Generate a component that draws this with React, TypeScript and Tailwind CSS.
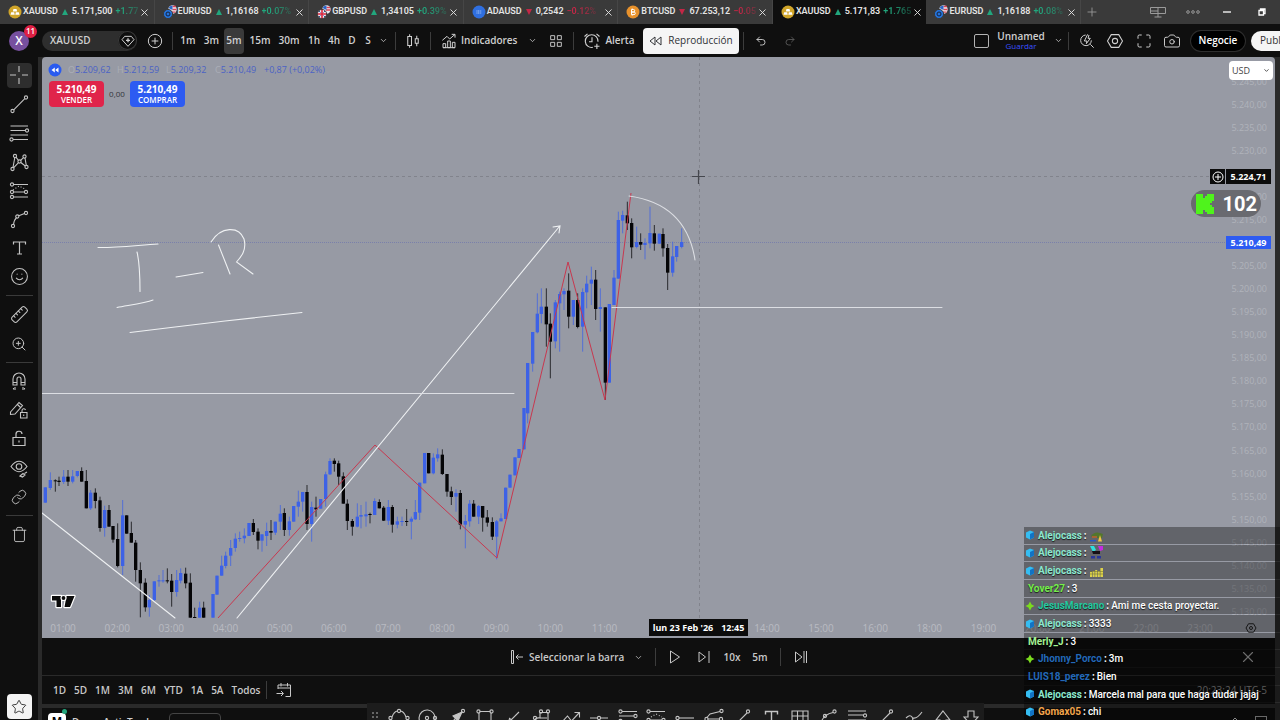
import React from "react";
import { Camera, ChevronDown, Eye, Link, LockOpen, Maximize, Plus, Redo2, Ruler, Smile, Star, Trash, Undo2, X, ZoomIn } from "lucide-react";

type Kids = { children: React.ReactNode };

function Ico({ children, className = "size-6" }: Kids & { className?: string }) {
  return (
    <svg viewBox="0 0 24 24" className={className} fill="none" stroke="currentColor" strokeWidth="1.1" aria-hidden="true">
      {children}
    </svg>
  );
}

/* x, body top, body bottom, wick top, wick bottom, falling */
type Candle = [number, number, number, number, number, number];

const session1: Candle[] = [
  [16, 142, 188, 142, 188, 0], [31, 120, 144, 97, 150, 0], [46, 121, 123, 118, 155, 1], [57, 122, 126, 110, 138, 1],
  [71, 110, 126, 90, 132, 0], [84, 110, 125, 90, 138, 1], [98, 109, 125, 90, 130, 0], [112, 93, 108, 93, 112, 0],
  [125, 93, 125, 82, 125, 1], [139, 123, 205, 90, 205, 1], [152, 158, 205, 150, 210, 0], [166, 158, 183, 145, 205, 1],
  [180, 181, 264, 170, 275, 1], [194, 210, 264, 197, 290, 0], [207, 210, 260, 195, 260, 1], [219, 258, 299, 258, 308, 1],
  [233, 297, 378, 250, 382, 1], [248, 226, 378, 180, 405, 0], [260, 226, 281, 226, 281, 1], [274, 279, 308, 245, 308, 1],
  [287, 308, 390, 300, 425, 1], [301, 390, 430, 367, 532, 1], [316, 428, 502, 415, 515, 1], [328, 480, 502, 465, 530, 0],
  [343, 424, 480, 424, 483, 0], [357, 421, 423, 405, 440, 0], [369, 421, 423, 390, 428, 0], [382, 421, 423, 385, 430, 1],
  [395, 422, 456, 402, 500, 1], [410, 420, 456, 390, 470, 0], [422, 399, 422, 385, 430, 0], [437, 401, 430, 383, 445, 1],
  [451, 428, 533, 400, 533, 1], [464, 531, 533, 503, 533, 1], [479, 503, 533, 485, 533, 0], [491, 503, 533, 485, 533, 1],
  [519, 462, 533, 462, 533, 0], [531, 407, 464, 407, 464, 0], [545, 377, 407, 347, 407, 0], [557, 347, 378, 335, 385, 0],
  [572, 324, 347, 300, 378, 0], [586, 296, 324, 280, 335, 0], [599, 294, 296, 275, 305, 0], [613, 287, 295, 265, 310, 0],
  [627, 249, 288, 249, 288, 0], [640, 249, 276, 237, 285, 1], [654, 275, 302, 265, 328, 1], [666, 283, 302, 283, 335, 0],
  [680, 273, 288, 248, 318, 0],
];
const session2: Candle[] = [
  [3, 333, 338, 300, 360, 1], [16, 305, 338, 305, 345, 0], [31, 281, 305, 255, 330, 0], [43, 279, 330, 265, 348, 1],
  [58, 304, 330, 290, 347, 0], [71, 258, 305, 258, 305, 0], [85, 245, 260, 212, 290, 0], [98, 216, 245, 216, 275, 0],
  [111, 216, 312, 195, 330, 1], [125, 261, 312, 245, 365, 0], [138, 263, 268, 230, 290, 1], [152, 237, 266, 237, 266, 0],
  [167, 163, 237, 155, 260, 0], [180, 123, 163, 115, 165, 0], [193, 122, 132, 115, 155, 1], [206, 130, 170, 122, 195, 1],
  [220, 169, 251, 157, 251, 1], [232, 251, 303, 238, 330, 1], [247, 303, 320, 297, 347, 1], [262, 290, 320, 250, 322, 0],
  [273, 285, 290, 255, 325, 0], [288, 283, 289, 245, 320, 0], [300, 282, 284, 278, 310, 1], [314, 243, 285, 235, 285, 0],
  [328, 246, 265, 238, 265, 1], [341, 263, 302, 258, 303, 1], [355, 261, 302, 240, 315, 0], [367, 261, 314, 255, 338, 1],
  [382, 304, 314, 290, 325, 0], [396, 303, 305, 290, 318, 0], [410, 303, 305, 267, 318, 1], [424, 296, 305, 290, 358, 0],
  [436, 276, 298, 240, 300, 0], [449, 188, 278, 188, 300, 0], [464, 99, 190, 99, 190, 0], [476, 99, 160, 99, 160, 1],
  [490, 113, 160, 100, 163, 0], [503, 103, 115, 85, 125, 0], [517, 104, 162, 88, 165, 1], [531, 162, 215, 162, 230, 1],
  [544, 214, 231, 200, 255, 1], [558, 219, 230, 208, 275, 0], [571, 219, 314, 210, 328, 1], [586, 303, 314, 285, 385, 0],
  [599, 251, 304, 240, 320, 0], [611, 251, 290, 240, 290, 1], [626, 258, 290, 255, 312, 0], [638, 258, 293, 258, 335, 1],
  [652, 292, 308, 270, 320, 1], [667, 306, 350, 292, 360, 1], [680, 304, 350, 300, 418, 0], [693, 295, 304, 280, 304, 0],
  [707, 203, 297, 203, 297, 0], [720, 164, 203, 164, 203, 0], [735, 112, 166, 112, 166, 0], [747, 87, 114, 87, 114, 0],
  [762, -36, 88, -36, 88, 0],
];
const session3: Candle[] = [
  [143, 609, 760, 609, 790, 0], [158, 516, 611, 516, 635, 0], [172, 461, 517, 400, 520, 0], [184, 440, 462, 385, 490, 0],
  [199, 440, 493, 385, 560, 1], [211, 491, 545, 460, 655, 1], [226, 427, 544, 420, 565, 0], [239, 402, 430, 395, 575, 0],
  [252, 393, 403, 385, 450, 0], [266, 392, 470, 340, 505, 1], [280, 420, 470, 420, 495, 0], [293, 420, 501, 400, 505, 1],
  [308, 396, 500, 385, 575, 0], [320, 371, 397, 347, 445, 0], [334, 359, 371, 320, 435, 0], [347, 359, 447, 330, 480, 1],
  [361, 441, 447, 385, 515, 0], [376, 442, 668, 442, 720, 1], [388, 432, 668, 432, 668, 0], [402, 353, 435, 330, 435, 0],
  [415, 180, 356, 155, 356, 0], [428, 165, 182, 152, 220, 0], [442, 166, 190, 125, 210, 1], [455, 189, 262, 175, 295, 1],
  [470, 246, 261, 200, 265, 0], [482, 246, 254, 220, 270, 1], [495, 249, 255, 235, 298, 0], [510, 219, 250, 140, 265, 0],
  [523, 220, 251, 195, 272, 1], [538, 221, 251, 221, 251, 0], [549, 222, 265, 205, 290, 1], [563, 264, 338, 252, 390, 1],
  [578, 289, 338, 245, 350, 0], [590, 258, 291, 258, 305, 0], [605, 246, 261, 205, 265, 0],
];

function Candles({ data, x, y }: { data: Candle[]; x: number; y: number }) {
  return (
    <g transform={`translate(${x} ${y}) scale(0.33333)`}>
      {data.map(([cx, top, bottom, high, low, falling]) => (
        <g key={cx} fill={falling ? "#050507" : "#3d62e6"}>
          <rect x={cx - 1.5} y={high} width="3" height={low - high} opacity="0.75" />
          <rect x={cx - 5} y={top} width="10" height={Math.max(bottom - top, 3)} />
        </g>
      ))}
    </g>
  );
}

function PriceChart() {
  return (
    <svg viewBox="42 57 1233 581" preserveAspectRatio="xMinYMin meet" className="absolute inset-0 h-full w-full" role="img" aria-label="XAUUSD 5m">
      <path d="M42 242.5H1226" stroke="#7a80aa" strokeWidth="1" strokeDasharray="1 1" />
      <path d="M42 176.5H1210M699.500 57V618" stroke="#81838c" strokeWidth="1" strokeDasharray="3 3" fill="none" />
      <Candles data={session1} x={40} y={440} />
      <Candles data={session2} x={270} y={420} />
      <Candles data={session3} x={480} y={160} />
      <path d="M218 618L375 445L497 558L568 262L605 400L631 193" fill="none" stroke="#c8384f" strokeWidth="1" />
      <g fill="none" stroke="#eef0f2" strokeWidth="1.100" strokeLinecap="round">
        <path d="M42 513L175 618M237 618L559 227M553 227L560 226L559 233" />
        <path d="M42 393.500H514M612 307.500H942" strokeWidth="1" stroke="#dcdee3" />
        <path d="M629 196C665 201 689 221 695 260" stroke="#dcdee3" />
        <path d="M98 247.500C115 248 140 245 158 244M137 252C140 264 140 278 140 291.500M117 307.500C130 305 145 303 153 300" />
        <path d="M176 277L203 272.500M218.500 245L230 274M211 242C221 226 239 226 244 239C247 250 241 257 236.500 262L253 274" />
        <path d="M130 332.500L175 327L225 321L302 312.500" />
      </g>
      <path d="M692 176.500H705M698.500 170V184" stroke="#45474e" strokeWidth="1.200" />
      <g stroke="#fff" strokeWidth="2.400" strokeLinejoin="round" paintOrder="stroke" fill="#0a0a0a">
        <path d="M52 596H61V607H56.500V600.500H52ZM66.500 596H74.500L70 607H64.500Z" />
        <circle cx="63.500" cy="598" r="1.900" />
      </g>
    </svg>
  );
}

function CoinIcon({ kind }: { kind: string }) {
  return (
    <svg viewBox="0 0 14 14" className="size-[14px] shrink-0" aria-hidden="true">
      {kind === "gold" && (<><circle cx="7" cy="7" r="6.500" fill="#d0a52a" /><path d="M5.500 4H8.500L9.200 6.500H4.800ZM3.200 7.300H6.200L6.700 9.700H2.500ZM7.800 7.300H10.800L11.500 9.700H7.300Z" fill="#fff" /></>)}
      {kind === "eur" && (<><circle cx="9.500" cy="4.500" r="4.200" fill="#e8eaf0" /><path d="M9.500 1.500H13M9.500 4.500H13.500M9 7.200H12.500" stroke="#d94355" strokeWidth="1.300" /><path d="M5.500 3A4.200 4.200 0 0 1 9.500 .4V5Z" fill="#2c66c9" /><circle cx="5" cy="9" r="4.600" fill="#2472d8" stroke="#3a3a3a" /><circle cx="5" cy="9" r="2" fill="none" stroke="#17223b" /></>)}
      {kind === "gbp" && (<><circle cx="9.500" cy="4.500" r="4.200" fill="#e8eaf0" /><path d="M9.500 2.500H13M9 5H13.500" stroke="#d94355" strokeWidth="1.300" /><path d="M5.500 3A4.200 4.200 0 0 1 9.500 .4V5Z" fill="#2c66c9" /><circle cx="5" cy="9" r="4.600" fill="#f2e9ee" stroke="#3a3a3a" /><path d="M5 4.800V13.200M.8 9H9.200" stroke="#d7263d" strokeWidth="1.600" /><path d="M2 6L3.500 7.500M8 6L6.500 7.500M2 12L3.500 10.500M8 12L6.500 10.500" stroke="#2c4f9e" /></>)}
      {kind === "ada" && (<><circle cx="7" cy="7" r="6.500" fill="#2f6fe0" /><path d="M4.500 6H9.500M4.500 8H9.500" stroke="#b9d2fb" strokeDasharray="1 .6" /></>)}
      {kind === "btc" && (<><circle cx="7" cy="7" r="6.500" fill="#e8922c" /><path d="M5.500 4.500H7.500A1.200 1.200 0 0 1 7.500 7H5.500ZM5.500 7H8A1.300 1.300 0 0 1 8 9.600H5.500ZM6.200 3.500V4.500M6.200 9.600V10.600" stroke="#fff" fill="none" /></>)}
    </svg>
  );
}

const tabs = [
  { icon: "gold", name: "XAUUSD", price: "5.171,500", change: "+1.77", up: true },
  { icon: "eur", name: "EURUSD", price: "1,16168", change: "+0.07%", up: true },
  { icon: "gbp", name: "GBPUSD", price: "1,34105", change: "+0.39%", up: true },
  { icon: "ada", name: "ADAUSD", price: "0,2542", change: "−0.12%", up: false },
  { icon: "btc", name: "BTCUSD", price: "67.253,12", change: "−0.05", up: false },
  { icon: "gold", name: "XAUUSD", price: "5.171,83", change: "+1.765", up: true, active: true },
  { icon: "eur", name: "EURUSD", price: "1,16188", change: "+0.08%", up: true },
];

function TabBar() {
  return (
    <header className="flex h-6 shrink-0 items-stretch bg-[#3a3a3a] text-[#e4e4e4]">
      <nav className="flex w-[1081px] shrink-0 font-['Roboto',sans-serif]">
        {tabs.map((t, i) => (
          <div key={i} className={t.active ? "flex min-w-0 flex-1 items-center bg-[#0f0f0f] pl-2 pr-[3px]" : "flex min-w-0 flex-1 items-center border-r border-[#464646] pl-2 pr-[3px]"}>
            <a href={"#tab" + i} className="flex min-w-0 flex-1 items-center text-[9px] font-semibold">
              <CoinIcon kind={t.icon} />
              <span className="ml-px whitespace-nowrap">{t.name}</span>
              <svg viewBox="0 0 6 6" className={t.up ? "mx-1 size-[6px] shrink-0 fill-[#22a67d]" : "mx-1 size-[6px] shrink-0 rotate-180 fill-[#c32746]"} aria-hidden="true"><path d="M3 0L6 6H0Z" /></svg>
              <span className="whitespace-nowrap">{t.price}</span>
              <span className={t.up ? "ml-[3px] min-w-0 overflow-hidden whitespace-nowrap bg-linear-to-r from-[#22a67d] from-30% to-[#22a67d50] bg-clip-text text-transparent" : "ml-[3px] min-w-0 overflow-hidden whitespace-nowrap bg-linear-to-r from-[#c32746] from-30% to-[#c3274650] bg-clip-text text-transparent"}>{t.change}</span>
            </a>
            <button aria-label="Cerrar pestaña" className="flex size-3 shrink-0 items-center justify-center"><X className="size-[11px]" strokeWidth={2} /></button>
          </div>
        ))}
      </nav>
      <button aria-label="Nueva pestaña" className="flex w-[22px] items-center justify-center text-[#999]"><Plus className="size-[14px]" strokeWidth={1.5} /></button>
      <div className="flex flex-1 items-center justify-end text-[#9a9a9a]">
        <button aria-label="Diseño" className="flex w-9 justify-center"><svg viewBox="0 0 18 12" className="h-3 w-[18px]" fill="none" stroke="currentColor" aria-hidden="true"><path d="M1.500 1.500H16.500V7.500H1.500ZM9 1.500V11M1.500 5H9M5.500 11H12.500" /></svg></button>
        <button aria-label="Más" className="flex w-[34px] justify-center"><svg viewBox="0 0 14 4" className="h-1 w-[14px]" fill="none" stroke="currentColor" aria-hidden="true"><circle cx="2" cy="2" r="1.300" /><circle cx="7" cy="2" r="1.300" /><circle cx="12" cy="2" r="1.300" /></svg></button>
        <button aria-label="Minimizar" className="flex w-[34px] justify-center text-white"><svg viewBox="0 0 8 2" className="h-[2px] w-2" aria-hidden="true"><path d="M0 1H8" stroke="currentColor" strokeWidth="1.300" /></svg></button>
        <button aria-label="Restaurar" className="flex w-9 justify-center text-white"><svg viewBox="0 0 8 8" className="size-2" fill="none" stroke="currentColor" strokeWidth="1.300" aria-hidden="true"><path d="M1 2.500H5.500V7H1ZM2.500 2.500V1H7V5.500H5.500" /></svg></button>
      </div>
    </header>
  );
}

function Sep() {
  return <span className="h-[18px] w-px shrink-0 bg-[#3c3c3c]" />;
}

function Toolbar() {
  return (
    <div className="flex h-[33px] shrink-0 items-center overflow-hidden bg-[#0f0f0f] text-[10px] font-semibold text-[#d0d0d0]">
      <button aria-label="Cuenta" className="relative flex w-[42px] shrink-0 justify-center pr-1">
        <span className="flex size-5 items-center justify-center rounded-full bg-[#77509f] text-[12px] text-white">X</span>
        <span className="absolute -top-[6px] left-6 flex h-[13px] items-center rounded-full bg-[#dd1f43] px-[2px] text-[8px] text-white">11</span>
      </button>
      <button className="flex h-5 w-[95px] shrink-0 items-center justify-between rounded-full bg-[#2e2e2e] pl-2">
        <span>XAUUSD</span>
        <span className="flex size-[19px] items-center justify-center rounded-full bg-[#0f0f0f] ring-1 ring-[#3a3a3a] ring-inset">
          <Ico className="size-4"><path d="M7 5H17L21 10L12 20L3 10Z" strokeWidth="1.500" /><path d="M12 8V14M9 11H15" strokeWidth="2" /></Ico>
        </span>
      </button>
      <button aria-label="Comparar" className="flex w-[35px] shrink-0 justify-center"><Ico className="size-4"><circle cx="12" cy="12" r="10" strokeWidth="1.500" /><path d="M12 7V17M7 12H17" strokeWidth="1.500" /></Ico></button>
      <Sep />
      <div className="ml-[3px] flex h-[26px] shrink-0 items-stretch">
        <button className="w-6">1m</button>
        <button className="w-[23px]">3m</button>
        <button className="mx-px w-5 rounded bg-[#3a3a3a]">5m</button>
        <button className="w-[30px]">15m</button>
        <button className="w-7">30m</button>
        <button className="w-[22px]">1h</button>
        <button className="w-[18px]">4h</button>
        <button className="w-[18px]">D</button>
        <button className="w-[14px]">S</button>
        <button aria-label="Intervalos" className="flex w-5 items-center justify-center pr-[3px]"><ChevronDown className="size-[9px]" /></button>
      </div>
      <Sep />
      <button aria-label="Tipo de gráfico" className="flex w-[34px] shrink-0 justify-center"><Ico className="size-[18px]"><path d="M5 6H10V18H5ZM7.500 3V6M7.500 18V21M15 9H19V15H15ZM17 5V9M17 15V19" strokeWidth="1.400" /></Ico></button>
      <Sep />
      <button className="flex shrink-0 items-center pl-[10px]">
        <Ico className="size-4"><path d="M3 22V16H7V22ZM10 22V12H14V22ZM17 22V14H21V22ZM3 22H21M2 11L9 5L13 9L21 2M16 2H21V7" strokeWidth="1.500" /></Ico>
        <span className="ml-1 w-[56px] whitespace-nowrap">Indicadores</span>
      </button>
      <button aria-label="Favoritos" className="flex w-[31px] shrink-0 justify-center"><ChevronDown className="size-[9px]" /></button>
      <button aria-label="Plantillas" className="flex w-4 shrink-0 justify-center"><Ico className="size-[18px]"><path d="M4 4H10V10H4ZM14 4H20V10H14ZM4 14H10V20H4ZM14 14H20V20H14Z" strokeWidth="1.400" /></Ico></button>
      <span className="ml-[9px] h-[18px] w-px shrink-0 bg-[#3c3c3c]" />
      <button className="flex shrink-0 items-center pl-[9px]">
        <Ico className="size-[18px]"><path d="M20 13A8.500 8.500 0 1 0 13 20.500M12 7V13H8M2 6L6 2.500M18 2.500L22 6M15 19H22M18.500 15.500V22.500" strokeWidth="1.500" /></Ico>
        <span className="ml-1 w-[30px]">Alerta</span>
      </button>
      <button className="ml-2 flex h-[26px] w-24 shrink-0 items-center justify-center gap-[6px] rounded bg-[#f5f5f5] font-normal text-[#303236]">
        <svg viewBox="0 0 13 10" className="h-[10px] w-[13px] shrink-0" fill="none" stroke="currentColor" aria-hidden="true"><path d="M6 1V9L1 5ZM12 1V9L7 5Z" /></svg>
        Reproducción
      </button>
      <span className="ml-1 h-[18px] w-px shrink-0 bg-[#3c3c3c]" />
      <button aria-label="Deshacer" className="flex w-[34px] shrink-0 justify-center"><Undo2 className="size-3" strokeWidth={1.8} /></button>
      <button aria-label="Rehacer" className="flex w-6 shrink-0 justify-center text-[#5a5a5a]"><Redo2 className="size-3" strokeWidth={1.8} /></button>
      <div className="min-w-0 flex-1" />
      <button aria-label="Diseño del gráfico" className="h-[14px] w-[15px] shrink-0 rounded-xs border border-[#b4b4b4]" />
      <button className="flex w-[64px] shrink-0 flex-col items-center leading-[11px]">
        <span>Unnamed</span>
        <span className="text-[8px] leading-2 font-normal text-[#3a4fff]">Guardar</span>
      </button>
      <button aria-label="Diseños" className="flex w-[11px] shrink-0 justify-center"><ChevronDown className="size-[9px]" /></button>
      <span className="ml-1 h-[18px] w-px shrink-0 bg-[#3c3c3c]" />
      <div className="flex w-[118px] shrink-0 justify-around pl-1">
        <button aria-label="Búsqueda rápida"><Ico className="size-4"><path d="M10 3A8 8 0 1 0 18.500 11M17 17L22 22M13 2L8 12H12L11 16L17 8H13.500L15 3" strokeWidth="1.500" /></Ico></button>
        <button aria-label="Configuración"><Ico className="size-[18px]"><path d="M7 3.500H17L22 12L17 20.500H7L2 12Z" strokeWidth="1.400" /><circle cx="12" cy="12" r="3.500" strokeWidth="1.400" /></Ico></button>
        <button aria-label="Pantalla completa"><Maximize className="size-4" strokeWidth={1.5} /></button>
        <button aria-label="Captura"><Camera className="size-[18px]" strokeWidth={1.3} /></button>
      </div>
      <button className="ml-1 h-5 w-[54px] shrink-0 rounded-full bg-black text-white ring-1 ring-[#2e2e2e]">Negocie</button>
      <button className="ml-[6px] h-5 w-[29px] shrink-0 overflow-hidden rounded-l-full bg-[#f5f5f5] pl-[9px] text-left font-normal text-[#333]">Publ</button>
    </div>
  );
}

const dot = (x: number, y: number) => <circle cx={x} cy={y} r="1.600" />;

const drawTools: [string, React.ReactNode][] = [
  ["Cruz", <Ico><path d="M12 3V9M12 15V21M3 12H9M15 12H21" /></Ico>],
  ["Línea de tendencia", <Ico>{dot(5.5, 19)}{dot(19, 5.5)}<path d="M6.700 17.800L17.800 6.700" /></Ico>],
  ["Fibonacci", <Ico><path d="M3.500 5H21M3.500 9.500H18.500M3.500 14H21M6 18.500H21" />{dot(20, 9.5)}{dot(4.5, 18.5)}</Ico>],
  ["Patrones", <Ico>{dot(8, 6)}{dot(17.5, 6.500)}{dot(5.5, 19)}{dot(19.5, 17)}{dot(12.5, 11.500)}<path d="M7.800 7.500L6 17.500M9 7.200L11.500 10.500M16.500 7.700L13.500 10.500M18 8L19.300 15.500M6.500 17.800L11.500 12.700M13.800 12.500L18.300 16" /></Ico>],
  ["Previsión", <Ico>{dot(5, 6.5)}{dot(5, 14)}{dot(5, 19)}{dot(19, 14)}<path d="M6.500 6.500H21M6.500 14H17.500M6.500 19H21" /><path d="M6 12L12 8L19 11.500" strokeDasharray="1 2" /></Ico>],
  ["Pincel", <Ico>{dot(6, 19)}{dot(10.3, 9.5)}{dot(19, 6)}<path d="M6.500 17.500C7 14 8 12 9.500 10.800M11.800 8.700L17.500 6.400" /></Ico>],
  ["Texto", <Ico><path d="M6.500 8.500V6H18.500V8.500M12.500 6V18M10 18H15" strokeWidth="1.200" /></Ico>],
  ["Emojis", <Smile className="size-[19px]" strokeWidth={1.3} />],
];
const measureTools: [string, React.ReactNode][] = [
  ["Medir", <Ruler className="size-[19px] -scale-x-100" strokeWidth={1.3} />],
  ["Acercar", <ZoomIn className="size-4" strokeWidth={1.5} />],
];
const modeTools: [string, React.ReactNode][] = [
  ["Imán", <Ico><path d="M6 16V10A6 6 0 0 1 18 10V16H14V10A2 2 0 0 0 10 10V16ZM6 13.500H10M14 13.500H18M8 18V21M6.500 19V20.500M16 18V21M17.500 19V20.500" /></Ico>],
  ["Modo dibujo", <Ico><path d="M3.500 14L12 4.500L15.500 7.500L8 16L3.500 16.500ZM10.500 6.500L13.500 9.500M13.500 14.500H20V20H13.500ZM15 14.500V12.500A1.800 1.800 0 0 1 18.500 12M16.700 16.500V18" /></Ico>],
  ["Bloquear", <Ico><path d="M6 10.500H18V18.500H6ZM9 10.500V7.500A3 3 0 0 1 15 7M12 13.500V15.500" strokeWidth="1.200" /></Ico>],
  ["Ocultar", <Ico><path d="M4 10.500Q12 0 20 10.500Q12 21 4 10.500Z" /><circle cx="12" cy="10.500" r="2.800" /><path d="M13 20L16 17.500L18 19L15.500 21ZM17.500 17.500L20 16" /></Ico>],
  ["Enlazar", <Link className="size-4" strokeWidth={1.4} />],
];

function ToolGroup({ tools, className }: { tools: [string, React.ReactNode][]; className: string }) {
  return (
    <div className={"flex w-full shrink-0 flex-col items-center " + className}>
      {tools.map(([label, icon]) => (
        <div key={label} className="flex flex-1 items-center">
          <button aria-label={label} className={label === "Cruz" ? "flex size-[25px] items-center justify-center rounded bg-[#2e2e2e]" : "flex size-[25px] items-center justify-center"}>{icon}</button>
        </div>
      ))}
    </div>
  );
}

function Sidebar() {
  return (
    <aside className="flex w-[38px] shrink-0 flex-col items-center bg-[#0f0f0f] pt-1 text-[#c4c4c4]">
      <ToolGroup tools={drawTools} className="h-[230px]" />
      <hr className="my-1 w-[27px] border-[#3a3a3a]" />
      <ToolGroup tools={measureTools} className="h-[58px]" />
      <hr className="my-1 w-[27px] border-[#3a3a3a]" />
      <ToolGroup tools={modeTools} className="h-[144px]" />
      <hr className="my-1 w-[27px] border-[#3a3a3a]" />
      <button aria-label="Eliminar" className="flex h-[29px] items-center"><Trash className="size-[17px]" strokeWidth={1.3} /></button>
      <div className="flex-1" />
      <button aria-label="Favoritos" className="mb-px flex size-[25px] shrink-0 items-center justify-center rounded bg-[#f4f4f4] text-[#222]"><Star className="size-4" strokeWidth={1.3} /></button>
    </aside>
  );
}

const prices = [
  "5.245,00", "5.240,00", "5.235,00", "5.230,00", "", "5.220,00", "5.215,00", "", "5.205,00", "5.200,00", "5.195,00", "5.190,00",
  "5.185,00", "5.180,00", "5.175,00", "5.170,00", "5.165,00", "5.160,00", "5.155,00", "5.150,00", "5.145,00", "5.140,00", "5.135,00", "5.130,00",
];
const hours = [
  "01:00", "02:00", "03:00", "04:00", "05:00", "06:00", "07:00", "08:00", "09:00", "10:00", "11:00",
  "", "", "14:00", "15:00", "16:00", "18:00", "19:00", "20:00", "21:00", "22:00", "23:00",
];

function Quote({ k, v }: { k: string; v: string }) {
  return <span className="w-[49px] whitespace-nowrap"><span className="text-[#abaeb8]">{k}</span>{v}</span>;
}

function TradeButton({ label, className }: { label: string; className: string }) {
  return (
    <button className={"flex h-[26px] w-[55px] flex-col items-center justify-center rounded " + className}>
      <span className="text-[10px] leading-[12px] font-bold">5.210,49</span>
      <span className="text-[8px] leading-[10px] font-semibold">{label}</span>
    </button>
  );
}

function Chart() {
  return (
    <section className="relative flex min-h-0 flex-1 flex-col overflow-hidden rounded-t-sm bg-[#979aa4]">
      <PriceChart />
      <div className="flex min-h-0 flex-1 justify-between">
        <div className="relative p-[6px]">
          <div className="flex h-[13px] items-center text-[9px] font-medium text-[#4b62c4]">
            <svg viewBox="0 0 14 14" className="mr-[6px] size-[14px]" aria-hidden="true"><circle cx="7" cy="7" r="6.500" fill="#2a5bf0" /><path d="M6.800 4.500V9.500L3.500 7ZM10.500 4.500V9.500L7.200 7Z" fill="#fff" /></svg>
            <Quote k="O" v="5.209,62" />
            <Quote k="H" v="5.212,59" />
            <Quote k="L" v="5.209,32" />
            <Quote k="C" v="5.210,49" />
            <span className="whitespace-nowrap">+0,87 (+0,02%)</span>
          </div>
          <div className="mt-[5px] ml-px flex items-center text-center text-white">
            <TradeButton label="VENDER" className="bg-[#e0244a]" />
            <span className="w-[26px] text-[8px] text-[#33353b]">0,00</span>
            <TradeButton label="COMPRAR" className="bg-[#2d5bf2]" />
          </div>
        </div>
        <ol className="relative mt-[14px] flex h-[552px] shrink-0 flex-col justify-between pr-2 text-right text-[9px] leading-[22px] text-[#b0b3bb]">
          {prices.map((p, i) => (<li key={i} className="h-[22px]">{p}</li>))}
        </ol>
      </div>
      <div className="relative -ml-[6px] mr-[48px] flex h-5 shrink-0 items-center text-center text-[10px] text-[#b9bbc2]">
        {hours.map((h, i) => (<span key={i} className="flex-1">{h}</span>))}
      </div>
      <label className="absolute top-1 right-[2px] flex h-[19px] w-11 items-center rounded-sm bg-white text-[9px] text-[#444]">
        <select aria-label="Moneda" className="w-full appearance-none pl-[3px] outline-none" defaultValue="USD"><option>USD</option></select>
        <ChevronDown className="absolute right-[3px] size-[7px]" strokeWidth={3} />
      </label>
      <div className="absolute top-[112px] right-1 flex h-[15px] gap-px text-[9px] font-bold text-white">
        <button aria-label="Añadir alerta" className="flex w-[15px] items-center justify-center bg-[#0c0c0c]"><Ico className="size-3"><circle cx="12" cy="12" r="10" strokeWidth="2" /><path d="M12 6V18M6 12H18" strokeWidth="2" /></Ico></button>
        <span className="flex w-[45px] items-center justify-center bg-[#0c0c0c]">5.224,71</span>
      </div>
      <div className="absolute top-[179px] right-1 flex h-[13px] w-[45px] items-center justify-center bg-[#2d5bf2] text-[9px] font-bold text-white">5.210,49</div>
      <div className="absolute top-[133px] right-[14px] flex h-[27px] w-[70px] items-center justify-between rounded-full bg-[#696a70] pr-1 pl-[5px] font-['Roboto',sans-serif] text-xl font-bold text-white">
        <svg viewBox="0 0 18 20" className="h-5 w-[18px]" aria-hidden="true"><path d="M0 0H7V4H9V2H11V0H18V7H16V9H14V11H16V13H18V20H11V18H9V16H7V20H0Z" fill="#4ff31c" /></svg>
        102
      </div>
      <div className="absolute bottom-[2px] left-[607px] flex h-[17px] w-[99px] items-center justify-center gap-2 bg-[#0c0c0c] text-[9px] font-bold whitespace-nowrap text-white"><span>lun 23 Feb '26</span><span>12:45</span></div>
      <button aria-label="Ajustes del eje" className="absolute right-[18px] bottom-1 text-[#222]"><Ico className="size-3"><path d="M7 3.500H17L22 12L17 20.500H7L2 12Z" strokeWidth="2" /><circle cx="12" cy="12" r="3" strokeWidth="2" /></Ico></button>
    </section>
  );
}

function ReplayBar() {
  return (
    <div className="flex h-[37px] shrink-0 items-center bg-[#0f0f0f] pt-px text-[10px] font-semibold text-[#c8c8c8]">
      <div className="flex flex-1 items-center pl-[468px]">
        <button className="flex shrink-0 items-center gap-[5px] whitespace-nowrap">
          <svg viewBox="0 0 14 14" className="size-[14px]" fill="none" stroke="currentColor" aria-hidden="true"><path d="M1.500 .5H3.500V13.500H1.500ZM13 7H6M8.500 4.500L6 7L8.500 9.500" /></svg>
          <span className="w-[95px] text-left">Seleccionar la barra</span>
        </button>
        <button aria-label="Opciones" className="ml-[6px] flex w-4 shrink-0 justify-center"><ChevronDown className="size-[9px]" /></button>
        <span className="ml-[9px] h-[18px] w-px shrink-0 bg-[#3c3c3c]" />
        <button aria-label="Reproducir" className="flex w-[38px] shrink-0 justify-center"><svg viewBox="0 0 12 14" className="h-[14px] w-3" fill="none" stroke="currentColor" aria-hidden="true"><path d="M1.500 1L10.500 7L1.500 13Z" /></svg></button>
        <button aria-label="Siguiente" className="flex w-[20px] shrink-0 justify-center"><svg viewBox="0 0 12 14" className="h-[14px] w-3" fill="none" stroke="currentColor" aria-hidden="true"><path d="M1 2L7.500 7L1 12ZM11 1V13" /></svg></button>
        <button className="w-9 shrink-0">10x</button>
        <button className="w-5 shrink-0">5m</button>
        <span className="ml-[10px] h-[18px] w-px shrink-0 bg-[#3c3c3c]" />
        <button aria-label="Ir al final" className="flex w-10 shrink-0 justify-center"><svg viewBox="0 0 14 14" className="size-[14px]" fill="none" stroke="currentColor" aria-hidden="true"><path d="M1.500 2L8 7L1.500 12ZM10 1V13M12.500 1V13" /></svg></button>
      </div>
      <button aria-label="Cerrar" className="mr-[18px] text-[#a8a8a8]"><X className="size-[18px]" strokeWidth={1.5} /></button>
    </div>
  );
}

function RangeBar() {
  return (
    <div className="flex h-[29px] shrink-0 items-center border-t border-[#2a2a2a] bg-[#0f0f0f] pr-2 pl-[11px] text-[10px] font-semibold text-[#c8c8c8]">
      <div className="flex gap-2 whitespace-nowrap">
        {["1D", "5D", "1M", "3M", "6M", "YTD", "1A", "5A", "Todos"].map((r) => (<button key={r}>{r}</button>))}
      </div>
      <span className="ml-[6px] h-[18px] w-px bg-[#3c3c3c]" />
      <button aria-label="Ir a" className="ml-[9px]"><svg viewBox="0 0 16 16" className="size-4" fill="none" stroke="currentColor" aria-hidden="true"><path d="M2 7V3H14.500V14.500H9.500M2 6H14.500M5 1V4.500M11.500 1V4.500M.5 11.500H7M5 9L7.500 11.500L5 14" /></svg></button>
      <span className="flex-1" />
      <button className="text-[10px] font-medium text-[#8a8a8a]">20:23:24 UTC-5</button>
    </div>
  );
}

const favourites: React.ReactNode[] = [
  <>{dot(3.5, 12)}{dot(12, 5)}{dot(20.5, 12)}<path d="M5 11Q7 5.500 10.500 5M13.500 5Q17 5.500 19 11M4 13.500Q6 19 12 19T20 13.500" /></>,
  <><path d="M20 13A8 8 0 1 0 12 20" />{dot(12, 12)}{dot(20, 12)}</>,
  <><path d="M4 20L12 12" />{dot(19, 5)}<path d="M18 6L14 15L9 10Z" fill="currentColor" /></>,
  <><path d="M6 6.500V18M18 6.500V18M6.500 5.500H17.500" />{dot(5.5, 5.5)}{dot(18.5, 5.5)}</>,
  <path d="M18 6L9 15Q7 18 5 17Q8 16 8.500 12.500L11 14" />,
  <><path d="M5 17Q4 11 10 12V6.500H18V17M10 12H17" />{dot(11, 5.5)}{dot(18, 5.5)}{dot(5, 12)}</>,
  <path d="M3 16L8.500 10L12.500 15L20 7M15.500 6.500H20.500V11.500" />,
  <><path d="M3 12H10.500M13.500 12H21" />{dot(12, 12)}</>,
  <><path d="M6 5.500H21M3 10H18M6 15H21" />{dot(4.5, 5.5)}{dot(19.5, 10)}{dot(4.5, 15)}</>,
  <><path d="M6 5.500H21M6 14H18" />{dot(4.5, 5.5)}{dot(4.5, 14)}{dot(19.5, 14)}<path d="M7 11L12 8L18 11" strokeDasharray="1 2" /></>,
  <><path d="M6 12H21" />{dot(4.5, 12)}</>,
  <><path d="M5 11.500L8 8L18 5.500M5.500 13H18" />{dot(4.5, 13)}{dot(19.5, 5)}{dot(19, 13)}</>,
  <><path d="M6 18L17 7" />{dot(18, 5.5)}</>,
  <path d="M6.500 8.500V5.500H18.500V8.500M12.500 5.500V18M10 18H15" strokeWidth="1.400" />,
  <path d="M4 5H20V19H4ZM4 10H20M4 14.500H20M9.500 5V19M15 5V19" />,
  <><path d="M5 18Q6 9 17 6.500" />{dot(18.5, 5.5)}{dot(9, 10)}</>,
  <><path d="M3 5H21M3 9H18M3 14H21" />{dot(20, 9.5)}</>,
  <><path d="M6 18L17 7" />{dot(18, 5.5)}</>,
  <path d="M4 12Q8 8 10 11T9 16M11 12Q15 13 20 6" />,
  <path d="M12 5L19 14H15V19H9V14H5Z" />,
  <path d="M9 5H15V11H19L12 19L5 11H9Z" />,
];

function BottomPanel() {
  return (
    <div className="flex h-[12px] shrink-0 items-start overflow-hidden bg-[#0f0f0f] pl-[6px] text-[10px] font-semibold text-[#d0d0d0]">
      <span className="relative mt-[5px] flex h-[18px] w-[18px] justify-center rounded bg-white text-[11px] leading-[16px] font-bold text-black">M<span className="absolute -top-1 -right-px size-[5px] rounded-full bg-[#22a67d]" /></span>
      <span className="ml-[6px] w-[97px] pt-[6px] leading-[16px] whitespace-nowrap">Demo ActivTrades</span>
      <button className="mt-[5px] h-6 w-[52px] rounded border border-[#444] px-2 text-left leading-[14px]">Operar</button>
      <span className="flex-1" />
      <button aria-label="Abrir panel" className="mr-[15px] mt-2"><svg viewBox="0 0 10 8" className="h-2 w-[10px]" fill="none" stroke="currentColor" aria-hidden="true"><path d="M1 6L5 2L9 6" /></svg></button>
      <button aria-label="Maximizar panel" className="mt-2 mr-2 h-3 w-3 border border-[#a0a0a0]" />
    </div>
  );
}

function FavouritesBar() {
  return (
    <div className="absolute bottom-0 left-[367px] flex h-[17px] w-[617px] items-start overflow-hidden bg-[#1c1c1c] text-[#c4c4c4]">
      <svg viewBox="0 0 6 12" className="mx-[5px] mt-[9px] h-3 w-[6px] shrink-0" fill="#666" aria-hidden="true"><path d="M0 0H2V2H0ZM4 0H6V2H4ZM0 4H2V6H0ZM4 4H6V6H4ZM0 8H2V10H0ZM4 8H6V10H4Z" /></svg>
      {favourites.map((f, i) => (
        <button key={i} aria-label={"Herramienta " + (i + 1)} className="flex min-w-0 flex-1 justify-center pt-[3px] pl-[3px]"><Ico className="size-6 shrink-0">{f}</Ico></button>
      ))}
    </div>
  );
}

function ChatBadge({ kind }: { kind: string }) {
  return (
    <svg viewBox="0 0 10 10" className="mr-[3px] size-[10px] shrink-0" aria-hidden="true">
      {kind === "cube" ? (<><path d="M1 2.500L5 .5L9 2V7.500L5 9.500L1 7.500Z" fill="#35bdf2" /><path d="M5 4L9 2V7.500L5 9.500Z" fill="#1273c4" /></>) : (<path d="M5 .5L6.600 3.400L9.500 5L6.600 6.600L5 9.500L3.400 6.600L.5 5L3.400 3.400Z" fill="#7bdc1e" />)}
    </svg>
  );
}

function Emote({ kind }: { kind: string }) {
  return (
    <svg viewBox="0 0 13 13" className="ml-[3px] size-[13px] shrink-0" aria-hidden="true">
      {kind === "frog" && (<><path d="M1 7Q5 1 13 5L12 9H3Z" fill="#53762d" /><path d="M2 7H7V9H2Z" fill="#a86432" /><path d="M0 11H6V12.500H0Z" fill="#2b58c0" /><path d="M10 6L12 12.500H8Z" fill="#f0c741" /></>)}
      {kind === "dance" && (<><path d="M0 0H4L6 4L3 6Z" fill="#2de0de" /><path d="M8 0H13V4L10 5Z" fill="#c52be0" /><path d="M2 5H10V8H3Z" fill="#171117" /><path d="M1 10H5V12.500H1ZM7 10H11V12.500H7Z" fill="#28379a" /></>)}
      {kind === "bars" && (<g fill="#ddd24b"><path d="M0 8H2V13H0ZM2.600 7H4.600V13H2.600ZM5.200 6H7.200V13H5.200ZM7.800 7H9.800V13H7.800ZM10.400 4H13V13H10.400Z" /><path d="M0 10H13M0 7.500H13" stroke="#77752f" strokeWidth=".6" /></g>)}
    </svg>
  );
}

const chat = [
  { badge: "cube", name: "Alejocass", color: "text-[#8ce8cf]", text: "", emote: "frog" },
  { badge: "cube", name: "Alejocass", color: "text-[#8ce8cf]", text: "", emote: "dance" },
  { badge: "cube", name: "Alejocass", color: "text-[#8ce8cf]", text: "", emote: "bars" },
  { name: "Yover27", color: "text-[#75ee4b]", text: "3" },
  { badge: "star", name: "JesusMarcano", color: "text-[#25c9a0]", text: "Ami me cesta proyectar." },
  { badge: "cube", name: "Alejocass", color: "text-[#8ce8cf]", text: "3333" },
  { name: "Merly_J", color: "text-[#a5f294]", text: "3" },
  { badge: "star", name: "Jhonny_Porco", color: "text-[#2368b8]", text: "3m" },
  { name: "LUIS18_perez", color: "text-[#2368b8]", text: "Bien" },
  { badge: "cube", name: "Alejocass", color: "text-[#8ce8cf]", text: "Marcela mal para que haga dudar jajaj" },
  { badge: "cube", name: "Gomax05", color: "text-[#f2a54c]", text: "chi" },
];

function Chat() {
  return (
    <ul className="pointer-events-none absolute right-0 bottom-0 flex h-[193px] w-64 flex-col gap-px font-['Roboto',sans-serif] text-[10px] font-bold text-white text-shadow-[0_1px_1px_#000000c0]">
      {chat.map((m, i) => (
        <li key={i} className={m.badge ? "flex min-h-0 flex-1 items-center bg-black/35 pl-[1px] whitespace-nowrap" : "flex min-h-0 flex-1 items-center bg-black/35 pl-1 whitespace-nowrap"}>
          {m.badge && <ChatBadge kind={m.badge} />}
          <span className={m.color}>{m.name}</span>
          <span className="ml-[2px]">:</span>
          {m.emote ? <Emote kind={m.emote} /> : <span className="ml-[2px] font-medium">{m.text}</span>}
        </li>
      ))}
    </ul>
  );
}

export default function App() {
  return (
    <div className="relative flex h-screen flex-col overflow-hidden bg-[#2a2a2a] font-['Open_Sans','Liberation_Sans',sans-serif]">
      <TabBar />
      <Toolbar />
      <div className="flex min-h-0 flex-1 gap-1">
        <Sidebar />
        <main className="mr-[5px] flex min-w-0 flex-1 flex-col">
          <Chart />
          <ReplayBar />
          <RangeBar />
          <div className="h-1 shrink-0" />
          <BottomPanel />
        </main>
      </div>
      <FavouritesBar />
      <Chat />
    </div>
  );
}
